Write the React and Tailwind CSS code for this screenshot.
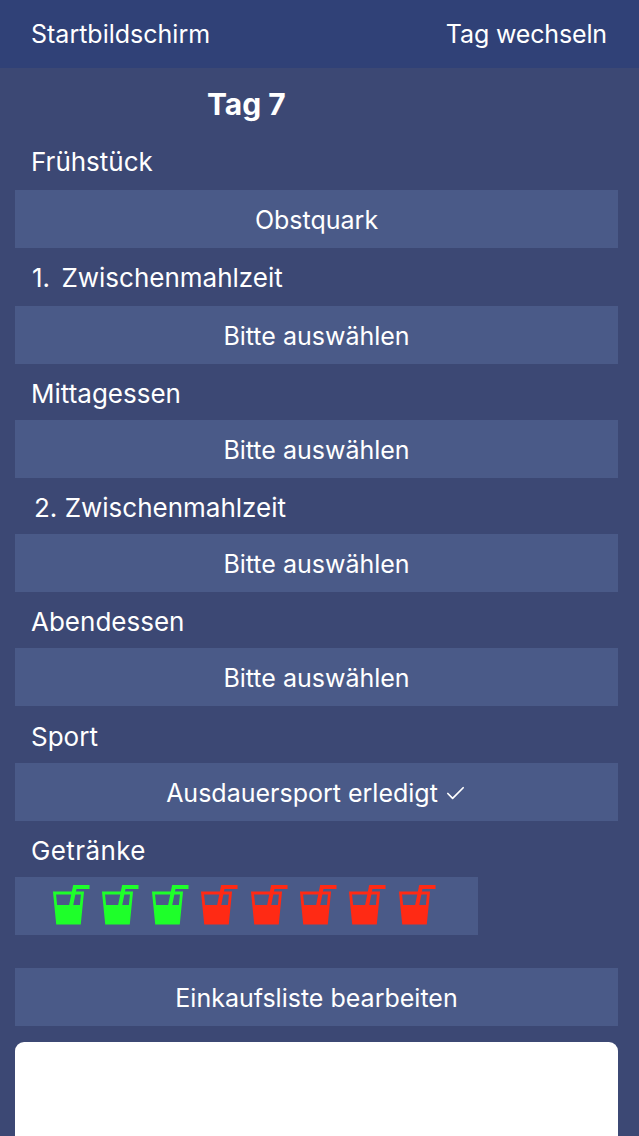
import React from "react";
import { Check } from "lucide-react";

const meals = [
  { label: "1. Zwischenmahlzeit", cls: "h-[58px] pl-[32px] pt-[2px] [word-spacing:4px]", value: "Bitte auswählen" },
  { label: "Mittagessen", cls: "h-[56px] pl-[31px] pt-[4px]", value: "Bitte auswählen" },
  { label: "2. Zwischenmahlzeit", cls: "h-[56px] pl-[34px] pt-[4px]", value: "Bitte auswählen" },
  { label: "Abendessen", cls: "h-[56px] pl-[31px] pt-[4px]", value: "Bitte auswählen" },
];

function Label({ className, children }) {
  return <div className={`flex shrink-0 items-center text-[26px] leading-none text-white ${className}`}>{children}</div>;
}

function Row({ children }) {
  return (
    <button className="mx-[15px] flex h-[58px] w-[603px] shrink-0 items-center justify-center bg-[#4a5a88] pt-[3px] text-[25px] text-white">
      {children}
    </button>
  );
}

function Drink({ color }) {
  return (
    <svg width="37" height="41" viewBox="0 0 37 41" className="shrink-0">
      <path d="M1.5 9 H29.5 L26.5 39 H4.5 Z" fill="none" stroke={color} strokeWidth="2.8" />
      <path d="M2.5 21 H28.5 L26.5 40 H4 Z" fill={color} />
      <path d="M18 22 L21.8 3 H36.5" fill="none" stroke={color} strokeWidth="4" />
    </svg>
  );
}

export default function App() {
  const drinks = ["#1eff2a", "#1eff2a", "#1eff2a", "#ff2a14", "#ff2a14", "#ff2a14", "#ff2a14", "#ff2a14"];

  return (
    <div className="flex h-[1136px] w-[639px] flex-col overflow-hidden bg-[#3c4874] font-['Inter',sans-serif]">
      <header className="flex h-[68px] shrink-0 items-center justify-between bg-[#304177] pl-[31px] pr-[32px] pt-[2px] text-[25px] text-white">
        <span>Startbildschirm</span>
        <span className="tracking-[-0.15px]">Tag wechseln</span>
      </header>

      <div className="flex h-[74px] shrink-0 items-start pl-[207px] pt-[21px] text-[30px] font-bold leading-none text-white">Tag 7</div>

      <Label className="h-[48px] pb-[8px] pl-[31px]">Frühstück</Label>
      <Row>Obstquark</Row>

      {meals.map((m) => (
        <div key={m.label} className="shrink-0">
          <Label className={m.cls}>{m.label}</Label>
          <Row>{m.value}</Row>
        </div>
      ))}

      <Label className="h-[57px] pl-[31px] pt-[4px]">Sport</Label>
      <Row>
        Ausdauersport erledigt
        <Check size={23} strokeWidth={1.8} className="ml-[6px]" />
      </Row>

      <Label className="h-[56px] pl-[31px] pt-[4px] tracking-[0.4px]">Getränke</Label>
      <div className="mx-[15px] flex h-[58px] w-[463px] shrink-0 items-start gap-[12.4px] bg-[#4a5a88] pl-[38px] pt-[7px]">
        {drinks.map((c, i) => (
          <Drink key={i} color={c} />
        ))}
      </div>

      <div className="mt-[33px] shrink-0">
        <Row>Einkaufsliste bearbeiten</Row>
      </div>

      <div className="mx-[15px] mt-[16px] h-[120px] w-[603px] shrink-0 rounded-t-[9px] bg-white" />
    </div>
  );
}
